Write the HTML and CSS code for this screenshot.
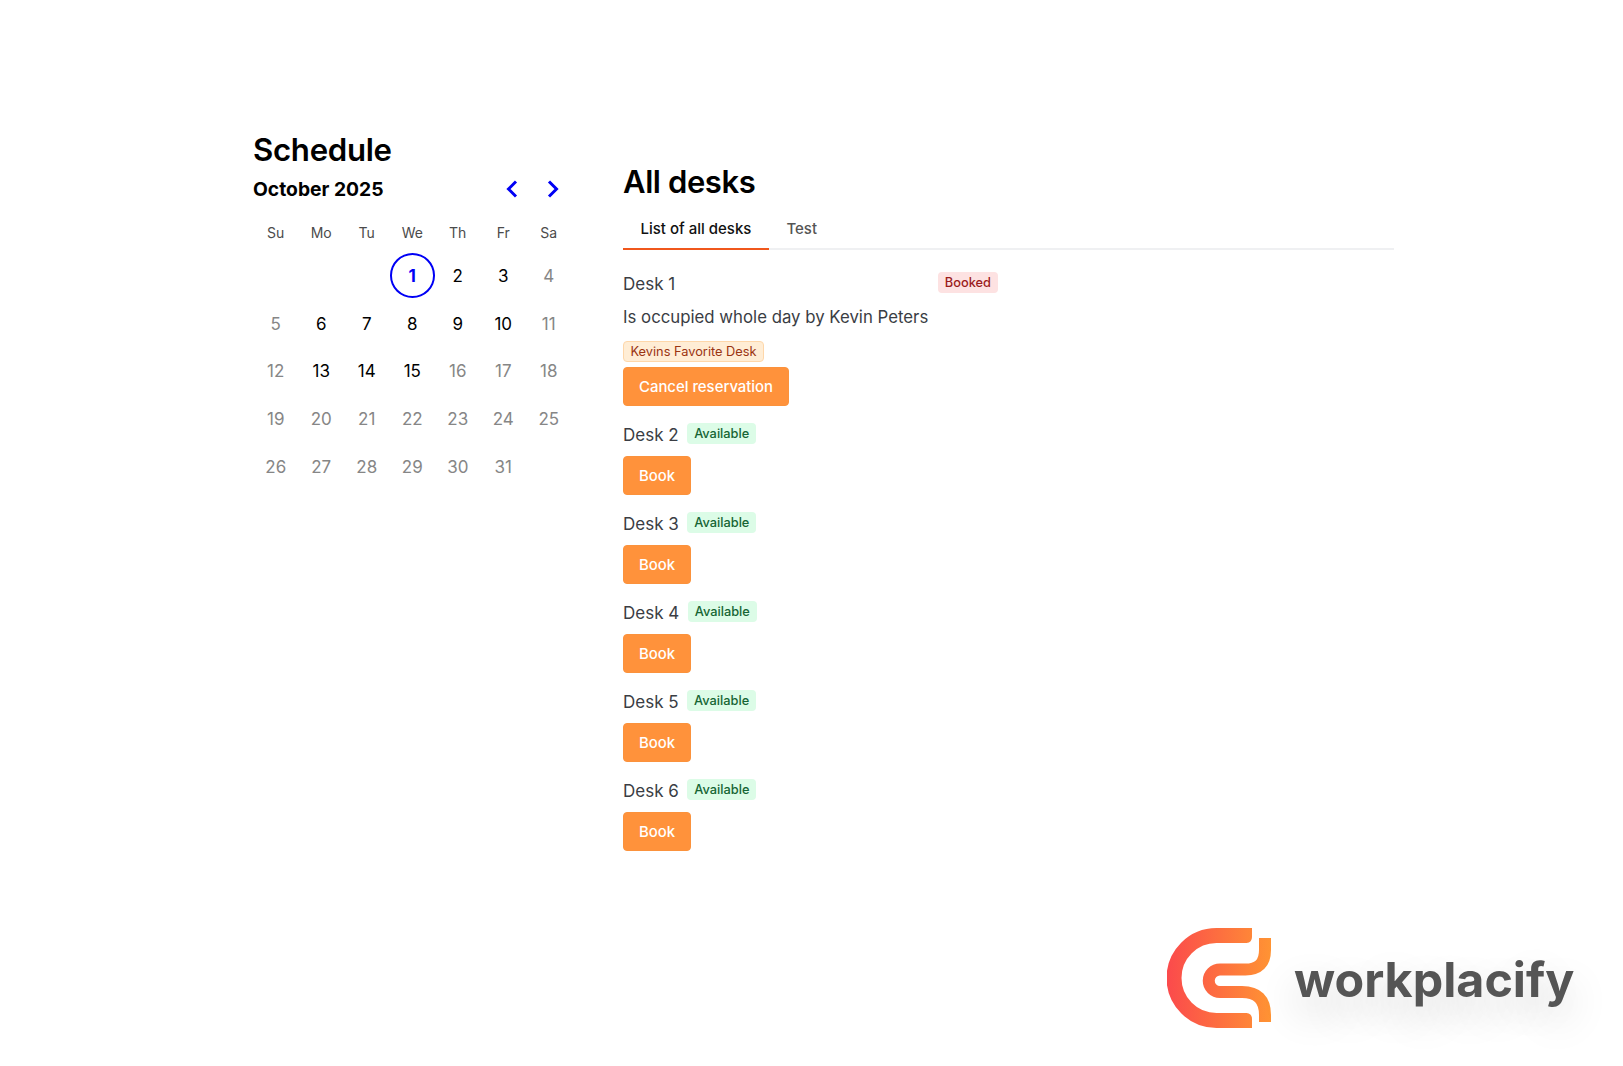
FILE: index.html
```html
<!DOCTYPE html>
<html lang="en">
<head>
<meta charset="utf-8">
<title>Schedule</title>
<link rel="stylesheet" href="styles.css">
</head>
<body>
<main class="page">
  <section class="schedule">
    <h1 class="title">Schedule</h1>
    <div class="month-bar">
      <span class="month">October 2025</span>
      <div class="arrows">
        <svg class="arrow" viewBox="0 0 12 18"><path d="M10 1.500 2.500 9l7.500 7.500"/></svg>
        <svg class="arrow" viewBox="0 0 12 18"><path d="M2 1.500 9.500 9 2 16.500"/></svg>
      </div>
    </div>
    <div class="dow">
      <span>Su</span><span>Mo</span><span>Tu</span><span>We</span><span>Th</span><span>Fr</span><span>Sa</span>
    </div>
    <div class="days">
      <span></span><span></span><span></span>
      <span class="today">1</span><span>2</span><span>3</span><span class="off">4</span>
      <span class="off">5</span><span>6</span><span>7</span><span>8</span><span>9</span><span>10</span><span class="off">11</span>
      <span class="off">12</span><span>13</span><span>14</span><span>15</span><span class="off">16</span><span class="off">17</span><span class="off">18</span>
      <span class="off">19</span><span class="off">20</span><span class="off">21</span><span class="off">22</span><span class="off">23</span><span class="off">24</span><span class="off">25</span>
      <span class="off">26</span><span class="off">27</span><span class="off">28</span><span class="off">29</span><span class="off">30</span><span class="off">31</span>
    </div>
  </section>
  <section class="desks">
    <h1 class="title">All desks</h1>
    <div class="tabs">
      <span class="tab active">List of all desks</span>
      <span class="tab">Test</span>
    </div>
    <div class="desk first">
      <div class="desk-head wide"><span class="desk-name">Desk 1</span><span class="badge red">Booked</span></div>
      <p class="note">Is occupied whole day by Kevin Peters</p>
      <span class="badge tag">Kevins Favorite Desk</span>
      <button class="btn">Cancel reservation</button>
    </div>
    <div class="desk">
      <div class="desk-head"><span class="desk-name">Desk 2</span><span class="badge green">Available</span></div>
      <button class="btn">Book</button>
    </div>
    <div class="desk">
      <div class="desk-head"><span class="desk-name">Desk 3</span><span class="badge green">Available</span></div>
      <button class="btn">Book</button>
    </div>
    <div class="desk">
      <div class="desk-head"><span class="desk-name">Desk 4</span><span class="badge green">Available</span></div>
      <button class="btn">Book</button>
    </div>
    <div class="desk">
      <div class="desk-head"><span class="desk-name">Desk 5</span><span class="badge green">Available</span></div>
      <button class="btn">Book</button>
    </div>
    <div class="desk">
      <div class="desk-head"><span class="desk-name">Desk 6</span><span class="badge green">Available</span></div>
      <button class="btn">Book</button>
    </div>
  </section>
</main>
<div class="brand">
  <svg class="brand-mark" viewBox="0 0 106 100">
    <defs>
      <linearGradient id="brandGrad" gradientUnits="userSpaceOnUse" x1="0" y1="0" x2="105" y2="0">
        <stop offset="0" stop-color="#fb4a4c"/>
        <stop offset="1" stop-color="#ff9433"/>
      </linearGradient>
    </defs>
    <path class="brand-stroke wide-stroke" d="M80 7.500H49.500a42.500 42.500 0 0 0 0 85H80"/>
    <path class="brand-end" d="M78 0h7v9q0 5.500-5.500 6H78zM78 100h7v-9q0-5.500-5.500-6H78z"/>
    <path class="brand-stroke thin-stroke" d="M98 10V22Q98 41.500 78.500 41.500H53a11.200 11.200 0 0 0 0 22.500H75Q98 64 98 87V94"/>
  </svg>
  <span class="brand-name">workplacify</span>
</div>
</body>
</html>
```
FILE: styles.css
```css
* { box-sizing: border-box; }
html, body { margin: 0; height: 100%; }
body {
  background: #fff;
  font-family: Inter, "Liberation Sans", sans-serif;
  color: #2d3038;
  position: relative;
  overflow: hidden;
}
.page {
  display: flex;
  align-items: flex-start;
  gap: 51px;
  padding: 130px 0 0 253px;
}
.title {
  margin: 0;
  font-size: 31.200px;
  line-height: 40px;
  font-weight: 600;
  letter-spacing: -0.3px;
  color: #000;
}
.desks .title { font-size: 31px; letter-spacing: -0.4px; }
.schedule { width: 319px; }
.month-bar {
  display: flex;
  justify-content: space-between;
  align-items: center;
  height: 30px;
  margin-top: 4px;
}
.month { font-size: 19.300px; font-weight: 700; color: #000; }
.arrows { display: flex; gap: 29px; padding-right: 13.500px; }
.arrow {
  width: 12px;
  height: 18px;
  fill: none;
  stroke: #0000f5;
  stroke-width: 3;
}
.dow, .days {
  display: grid;
  grid-template-columns: repeat(7, 45.500px);
  justify-items: center;
  text-align: center;
}
.dow {
  margin-top: 19px;
  font-size: 14px;
  line-height: 20px;
  color: #4b4b4b;
}
.days { margin-top: 11px; grid-auto-rows: 47.700px; font-size: 17px; color: #000; }
.days span {
  width: 45.500px;
  height: 45.500px;
  line-height: 45.500px;
  border-radius: 50%;
}
.days .off { color: #868686; }
.days .today {
  border: 2px solid #0000f5;
  height: 45px;
  margin-top: -1px;
  line-height: 42.500px;
  color: #0000f5;
  font-weight: 700;
}
.desks { width: 771px; padding-top: 32px; }
.tabs {
  display: flex;
  margin-top: 12px;
  border-bottom: 2px solid #eff0f2;
  height: 36px;
}
.tab {
  padding: 0 17.500px;
  font-size: 15px;
  line-height: 30px;
  font-weight: 500;
  color: #555;
}
.tab.active {
  color: #111;
  height: 36px;
  border-bottom: 2px solid #f0571c;
}
.desk {
  display: flex;
  flex-direction: column;
  align-items: flex-start;
  width: fit-content;
  margin-top: 15px;
}
.desk.first { margin-top: 20px; }
.desk-head { display: flex; align-items: flex-start; gap: 8.500px; height: 35px; }
.desk-head.wide { width: 375px; justify-content: space-between; }
.desk-name { font-size: 17px; line-height: 29px; color: #3a3d44; }
.badge {
  display: inline-block;
  height: 21px;
  padding: 0 6.500px;
  border-radius: 4px;
  font-size: 12.800px;
  line-height: 22px;
  font-weight: 500;
}
.desk-head .badge { margin-top: 2px; padding: 0 7px; }
.desk-head.wide .badge { margin-top: 1.500px; }
.red { background: #fde2e2; color: #9b1c1c; }
.green { background: #dcfce7; color: #166534; }
.tag {
  background: #ffedd5;
  color: #9a3412;
  border: 1px solid #fed7aa;
  line-height: 20px;
  font-weight: 400;
}
.note { margin: 0 0 12px; font-size: 16.800px; line-height: 24px; color: #3a3d44; }
.btn {
  display: block;
  height: 39px;
  margin-top: 5px;
  padding: 0 15px;
  border: 1px solid #fb923c;
  border-radius: 4px;
  background: #ff923b;
  color: #fff;
  font: 500 14.900px/39px Inter, "Liberation Sans", sans-serif;
}
.desk-head + .btn { margin-top: 0; }
.brand {
  position: absolute;
  left: 1167px;
  top: 928px;
  display: flex;
  align-items: center;
  gap: 21px;
}
.brand-mark { width: 106px; height: 100px; display: block; }
.brand-stroke { fill: none; stroke: url(#brandGrad); }
.wide-stroke { stroke-width: 15; }
.thin-stroke { stroke-width: 12; }
.brand-end { fill: url(#brandGrad); }
.brand-name {
  padding-top: 3px;
  font-size: 48.400px;
  font-weight: 700;
  color: #555;
  text-shadow: 0 16px 42px rgba(0, 0, 0, 0.2);
}
```
